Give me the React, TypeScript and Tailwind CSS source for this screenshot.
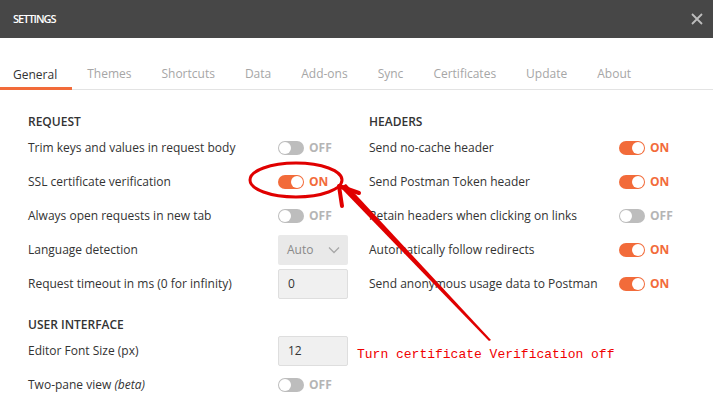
import React from "react";

function Toggle({ on }: { on: boolean }) {
  return (
    <div className="flex items-center">
      {on ? (
        <div className="w-[26px] h-[14px] rounded-full bg-[#f26b3a] flex items-center justify-end pr-[1px]">
          <div className="w-[12px] h-[12px] rounded-full bg-white" />
        </div>
      ) : (
        <div className="w-[26px] h-[14px] rounded-full bg-[#bdbdbd] flex items-center pl-[1px]">
          <div className="w-[12px] h-[12px] rounded-full bg-white" />
        </div>
      )}
      <span
        className={
          on
            ? "ml-[5px] text-[12px] font-bold text-[#f26b3a]"
            : "ml-[5px] text-[12px] font-bold text-[#b5b5b5]"
        }
      >
        {on ? "ON" : "OFF"}
      </span>
    </div>
  );
}

function Input({ value }: { value: string }) {
  return (
    <div className="w-[70px] h-[30px] bg-[#f0f0f0] border border-[#dedede] rounded-[2px] flex items-center pl-[9px] text-[12px] text-[#333]">
      {value}
    </div>
  );
}

function Select() {
  return (
    <div className="w-[70px] h-[30px] bg-[#e9e9e9] rounded-[2px] flex items-center justify-between pl-[9px] pr-[8px] text-[12px] text-[#8a8a8a]">
      <span>Auto</span>
      <svg width="12" height="8" viewBox="0 0 12 8">
        <path d="M1 1.5 L6 6.5 L11 1.5" fill="none" stroke="#a8a8a8" strokeWidth="1.3" />
      </svg>
    </div>
  );
}

function Row({ label, children }: { label: React.ReactNode; children: React.ReactNode }) {
  return (
    <div className="h-[34px] flex items-center">
      <div className="w-[250px] text-[12px] text-[#333]">{label}</div>
      <div className="w-[70px]">{children}</div>
    </div>
  );
}

function Section({ title }: { title: string }) {
  return <div className="h-[18px] leading-[18px] text-[12px] font-semibold text-[#333]">{title}</div>;
}

export default function App() {
  const tabs = ["General", "Themes", "Shortcuts", "Data", "Add-ons", "Sync", "Certificates", "Update", "About"];
  return (
    <div
      className="relative w-[713px] h-[401px] bg-white overflow-hidden"
      style={{ fontFamily: '"Open Sans", "Noto Sans", sans-serif' }}
    >
      <div className="h-[38px] bg-[#474747] flex items-center justify-between pl-[13px] pr-[10px]">
        <span className="text-[11px] font-semibold tracking-[-1px] text-white">SETTINGS</span>
        <svg width="12" height="12" viewBox="0 0 12 12">
          <path d="M1 1 L11 11 M11 1 L1 11" stroke="#bdbdbd" strokeWidth="1.8" />
        </svg>
      </div>
      <div className="h-[52px] border-b border-[#e3e3e3] flex items-end ml-[-2px]">
        {tabs.map((t, i) => (
          <div
            key={t}
            className={
              i === 0
                ? "h-[52px] pt-[28px] px-[15px] text-[12px] leading-[18px] text-[#333] border-b-[3px] border-[#f26b3a] mb-[-1px]"
                : "h-[52px] pt-[28px] px-[15px] text-[12px] leading-[18px] text-[#a6a6a6]"
            }
          >
            {t}
          </div>
        ))}
      </div>
      <div className="pl-[28px] pt-[23px] flex">
        <div className="w-[341px]">
          <Section title="REQUEST" />
          <Row label="Trim keys and values in request body">
            <Toggle on={false} />
          </Row>
          <Row label="SSL certificate verification">
            <Toggle on={true} />
          </Row>
          <Row label="Always open requests in new tab">
            <Toggle on={false} />
          </Row>
          <Row label="Language detection">
            <Select />
          </Row>
          <Row label="Request timeout in ms (0 for infinity)">
            <Input value="0" />
          </Row>
          <div className="mt-[15px]">
            <Section title="USER INTERFACE" />
          </div>
          <Row label="Editor Font Size (px)">
            <Input value="12" />
          </Row>
          <Row
            label={
              <span>
                Two-pane view <i>(beta)</i>
              </span>
            }
          >
            <Toggle on={false} />
          </Row>
        </div>
        <div className="w-[330px]">
          <Section title="HEADERS" />
          <Row label="Send no-cache header">
            <Toggle on={true} />
          </Row>
          <Row label="Send Postman Token header">
            <Toggle on={true} />
          </Row>
          <Row label="Retain headers when clicking on links">
            <Toggle on={false} />
          </Row>
          <Row label="Automatically follow redirects">
            <Toggle on={true} />
          </Row>
          <Row label="Send anonymous usage data to Postman">
            <Toggle on={true} />
          </Row>
        </div>
      </div>

      <svg className="absolute left-0 top-0 pointer-events-none" width="713" height="401" viewBox="0 0 713 401">
        <ellipse cx="296" cy="180" rx="46" ry="17" fill="none" stroke="#e00000" strokeWidth="3" />
        <polygon points="340,187 346,184 491,340 489,341" fill="#e00000" />
        <polyline
          points="342,206 339,186 359,193"
          fill="none"
          stroke="#e00000"
          strokeWidth="4"
          strokeLinecap="round"
          strokeLinejoin="round"
        />
      </svg>
      <div
        className="absolute left-[357px] top-[346px] text-[13px] leading-[18px] text-[#f00000] whitespace-pre"
        style={{ fontFamily: '"Liberation Mono", monospace' }}
      >
        Turn certificate Verification off
      </div>
    </div>
  );
}
